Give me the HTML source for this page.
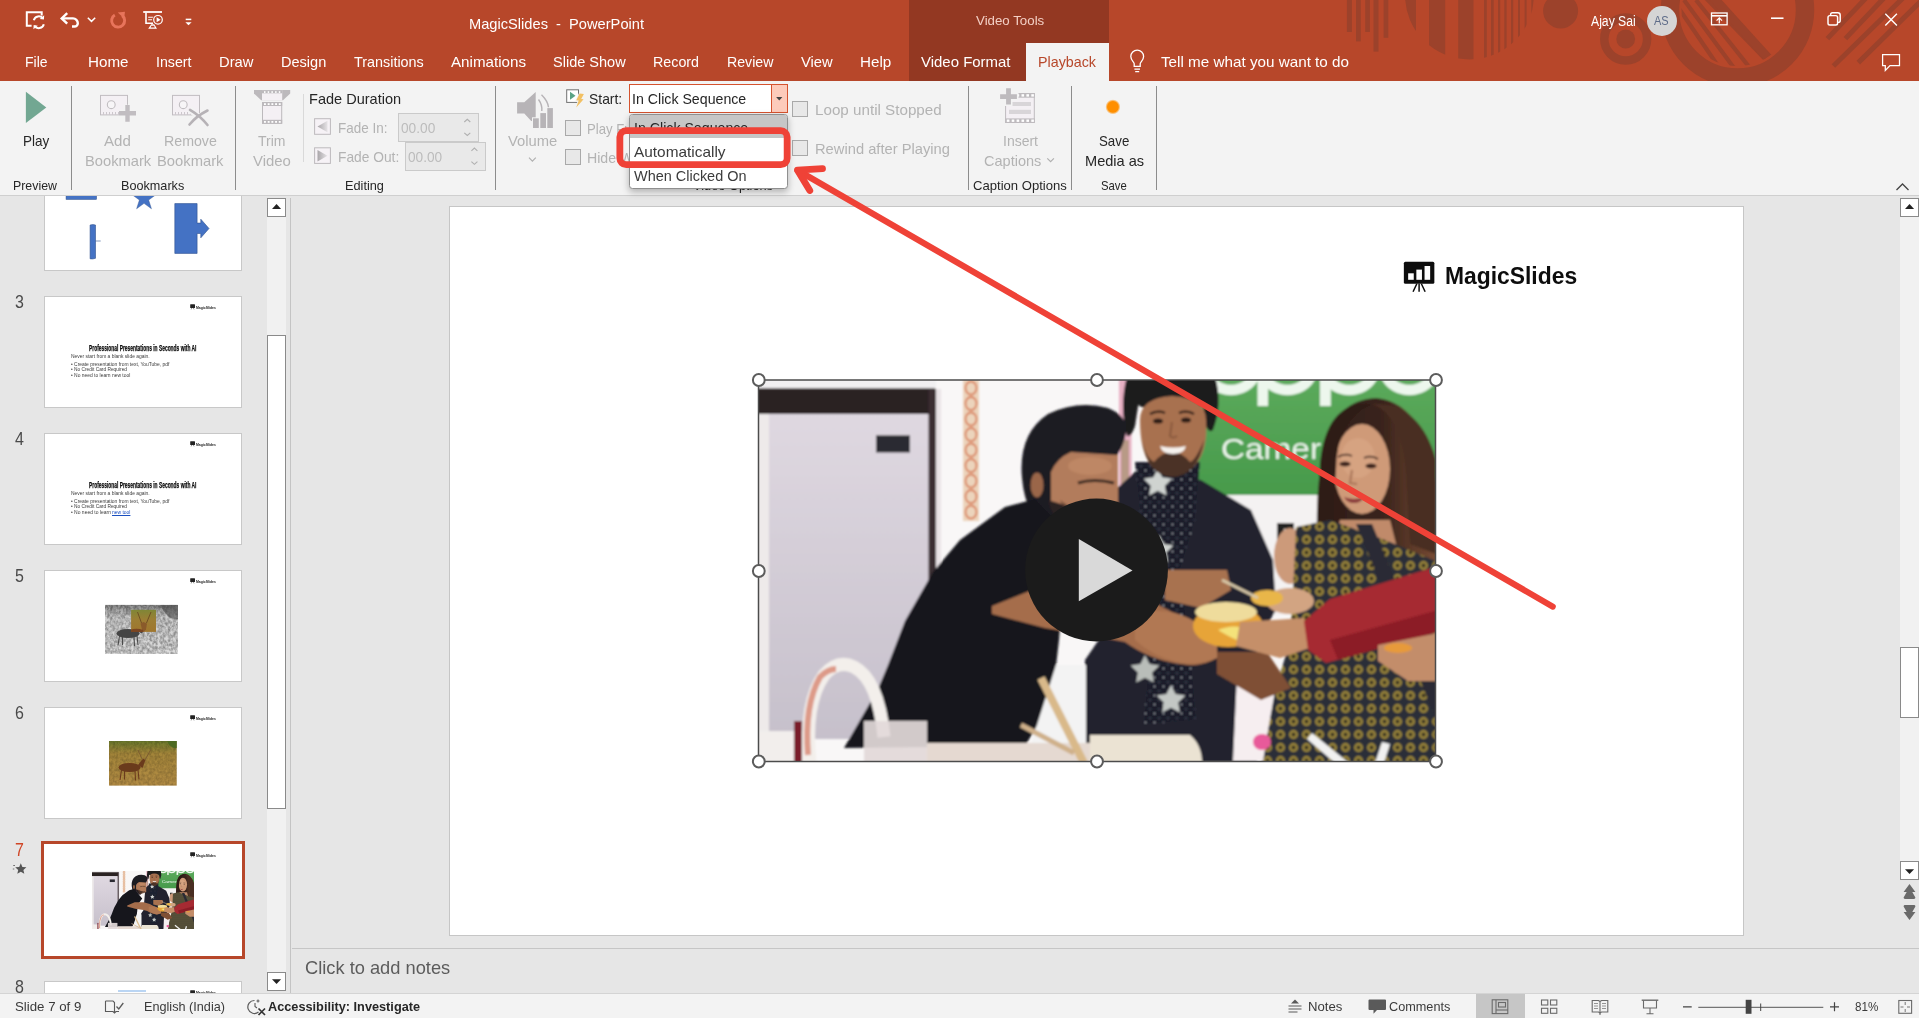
<!DOCTYPE html>
<html><head><meta charset="utf-8"><title>PowerPoint</title>
<style>
*{box-sizing:border-box;margin:0;padding:0}
html,body{width:1919px;height:1018px;overflow:hidden;background:#e6e6e6;font-family:"Liberation Sans",sans-serif;font-size:15px;color:#262626}
.abs{position:absolute}
#titlebar{position:absolute;left:0;top:0;width:1919px;height:81px;background:#b7472a;overflow:hidden}
#vtools{position:absolute;left:909px;top:0;width:200px;height:81px;background:#933822}
#pbtab{position:absolute;left:1026px;top:43px;width:83px;height:38px;background:#f3f3f3}
.t{position:absolute;white-space:pre;line-height:1;transform-origin:0 0}
#ribbon{position:absolute;left:0;top:81px;width:1919px;height:115px;background:#f3f3f3;border-bottom:1.5px solid #cfcfcf}
#divider{position:absolute;left:290px;top:198px;width:1px;height:796px;background:#c4c4c4}
#slide{position:absolute;left:449px;top:206px;width:1295px;height:730px;background:#fff;border:1px solid #c6c6c6}
#statusbar{position:absolute;left:0;top:993px;width:1919px;height:25px;background:#f3f3f3;border-top:1px solid #d4d4d4}
</style></head><body>
<svg width="0" height="0" style="position:absolute"><defs><filter id="pb" x="-5%" y="-5%" width="110%" height="110%"><feGaussianBlur stdDeviation="1.1"/></filter><filter id="pb2" x="-5%" y="-5%" width="110%" height="110%"><feGaussianBlur stdDeviation="3"/></filter><pattern id="dress" width="13" height="13" patternUnits="userSpaceOnUse"><rect width="13" height="13" fill="#2b2f38"/><circle cx="6.5" cy="6.5" r="4.4" fill="#a08a3a"/><circle cx="6.5" cy="6.5" r="2.2" fill="#3a3420"/></pattern><pattern id="stars" width="9" height="9" patternUnits="userSpaceOnUse"><rect width="9" height="9" fill="#1b1f2c"/><circle cx="2.5" cy="2.5" r="0.8" fill="#c4c8d0"/><circle cx="7" cy="7" r="0.6" fill="#a9aeb8"/></pattern><linearGradient id="frg" x1="0" x2="0" y1="0" y2="1"><stop offset="0" stop-color="#dfd8e1"/><stop offset="1" stop-color="#c6c0cb"/></linearGradient><linearGradient id="grn" x1="0" x2="0" y1="0" y2="1"><stop offset="0" stop-color="#5caa5c"/><stop offset="1" stop-color="#479a4b"/></linearGradient><linearGradient id="hairw" x1="0" x2="1"><stop offset="0" stop-color="#2e1c18"/><stop offset="0.55" stop-color="#3a241c"/><stop offset="1" stop-color="#7a4c34"/></linearGradient><symbol id="photo" viewBox="0 0 678 381" preserveAspectRatio="none"><g transform="translate(-758,-380)"><rect x="758" y="380" width="678" height="381" fill="#f9f7f7"/><g filter="url(#pb)"><rect x="1196" y="376" width="244" height="119" fill="url(#grn)"/><ellipse cx="1231" cy="369.5" rx="24.5" ry="20.5" fill="none" stroke="#edf7ed" stroke-width="10.5"/><ellipse cx="1287.5" cy="369.5" rx="24.5" ry="20.5" fill="none" stroke="#edf7ed" stroke-width="10.5"/><ellipse cx="1349.4" cy="369.5" rx="24.5" ry="20.5" fill="none" stroke="#edf7ed" stroke-width="10.5"/><ellipse cx="1409.4" cy="369.5" rx="24.5" ry="20.5" fill="none" stroke="#edf7ed" stroke-width="10.5"/><rect x="1257.5" y="369" width="10.5" height="37" fill="#edf7ed"/><rect x="1320" y="369" width="10.8" height="37" fill="#edf7ed"/><text x="1221" y="459" font-family="Liberation Sans,sans-serif" font-size="29" fill="#edf6ed" textLength="150" lengthAdjust="spacingAndGlyphs">Camera P</text><rect x="1200" y="495" width="140" height="120" fill="#f4f2f2"/><path d="M1277 523h17v6h-10v8h9v6h-9v17h-7z" fill="#222"/><rect x="756" y="378" width="180" height="12" fill="#f1eff1"/><rect x="756" y="388.3" width="179" height="26.7" fill="#2b2322"/><rect x="756" y="414" width="14" height="330" fill="#eeeaea"/><rect x="769" y="414" width="161" height="325" fill="url(#frg)"/><rect x="876" y="435.3" width="34" height="17.2" fill="#2b2b30"/><rect x="928.5" y="389" width="8.5" height="306" fill="#3a2e33"/><rect x="936" y="389" width="5" height="300" fill="#e9e3e6"/><rect x="963" y="378" width="16" height="143" fill="#ecd4bc"/><ellipse cx="971" cy="388" rx="5.5" ry="6.5" fill="none" stroke="#d9825e" stroke-width="1.8"/><ellipse cx="971" cy="403.5" rx="5.5" ry="6.5" fill="none" stroke="#d9825e" stroke-width="1.8"/><ellipse cx="971" cy="419" rx="5.5" ry="6.5" fill="none" stroke="#d9825e" stroke-width="1.8"/><ellipse cx="971" cy="434.5" rx="5.5" ry="6.5" fill="none" stroke="#d9825e" stroke-width="1.8"/><ellipse cx="971" cy="450" rx="5.5" ry="6.5" fill="none" stroke="#d9825e" stroke-width="1.8"/><ellipse cx="971" cy="465.5" rx="5.5" ry="6.5" fill="none" stroke="#d9825e" stroke-width="1.8"/><ellipse cx="971" cy="481" rx="5.5" ry="6.5" fill="none" stroke="#d9825e" stroke-width="1.8"/><ellipse cx="971" cy="496.5" rx="5.5" ry="6.5" fill="none" stroke="#d9825e" stroke-width="1.8"/><ellipse cx="971" cy="512" rx="5.5" ry="6.5" fill="none" stroke="#d9825e" stroke-width="1.8"/><rect x="1119" y="378" width="12.5" height="108" fill="#e8b0c4"/><rect x="1121" y="440" width="8" height="46" fill="#b89a86"/><path d="M1113 492l26-24 62 12 50 30 22 50 3 50-19 32v120h-172v-102l15-22z" fill="#24242f"/><path d="M1135 462h65l-5 58-15 50 10 82h-40v-82l-10-58z" fill="url(#stars)"/><path d="M1150 645l40 0 6 75-52 4z" fill="url(#stars)"/><path d="M1159 575l4.5 9 10 1.5-7.3 7 1.7 10-8.9-4.7-8.9 4.7 1.7-10-7.3-7 10-1.5z" fill="#cfd3d0" transform="translate(0,-40)"/><path d="M1159 575l4.5 9 10 1.5-7.3 7 1.7 10-8.9-4.7-8.9 4.7 1.7-10-7.3-7 10-1.5z" fill="#cfd3d0" transform="translate(22,-95) scale(.98)"/><path d="M1159 575l4.5 9 10 1.5-7.3 7 1.7 10-8.9-4.7-8.9 4.7 1.7-10-7.3-7 10-1.5z" fill="#c3c7c4" transform="translate(12,110)"/><path d="M1159 575l4.5 9 10 1.5-7.3 7 1.7 10-8.9-4.7-8.9 4.7 1.7-10-7.3-7 10-1.5z" fill="#b9bdb9" transform="translate(-14,80)"/><path d="M1127 436q-8-30 0-60l88 0q8 28-2 54q-4 4-8-6l-2-24-64 0-4 26q-4 12-8 10z" fill="#1f1b1f"/><ellipse cx="1170" cy="392" rx="42" ry="20" fill="#1f1b1f"/><path d="M1140 420q0-22 32-24q34 2 34 24q2 30-10 44q-10 12-24 12q-14 0-22-12q-10-14-10-44z" fill="#a8714f"/><path d="M1142 440q6 36 30 37q26-1 32-37q-8 20-14 22q-8-10-18-10q-10 0-18 10q-8-4-12-22z" fill="#4b3327"/><path d="M1160 446q13 3 26 0q-2 8-13 8q-11 0-13-8z" fill="#f6f2ee"/><ellipse cx="1158" cy="421" rx="5" ry="2.6" fill="#2a1c18"/><ellipse cx="1186" cy="420" rx="5" ry="2.6" fill="#2a1c18"/><path d="M1150 414q8-4 15-1M1179 413q8-3 15 1" fill="none" stroke="#2a1c18" stroke-width="2.2"/><path d="M1172 422l-2 14q3 3 7 0" fill="none" stroke="#8a5a3e" stroke-width="2"/><path d="M1318 560q-4-70 6-110q10-50 52-52q40 4 56 60l6 30v120l-40 10-30-60z" fill="url(#hairw)"/><path d="M1340 520l50 0 10 40-70-6z" fill="#c08a6a"/><ellipse cx="1362" cy="469" rx="28" ry="45" fill="#cf9a78"/><ellipse cx="1358" cy="458" rx="17" ry="20" fill="#d9a684" opacity="0.7"/><path d="M1336 470q0-50 36-66q-46-4-52 60l-2 96 16 0q-2-50 2-90z" fill="#2e1c18"/><path d="M1372 404q30 10 34 70l4 70 26 10 0-94q-16-58-64-56z" fill="#4a2e22"/><path d="M1344 497q10 4 20 0q-3 6-10 6q-7 0-10-6z" fill="#8a3a3a"/><path d="M1352 470l-2 13 7 1" fill="none" stroke="#a87458" stroke-width="2"/><ellipse cx="1345" cy="464" rx="5.5" ry="2.4" fill="#3a241e"/><ellipse cx="1371" cy="466" rx="5.5" ry="2.4" fill="#3a241e"/><path d="M1338 457q7-4 14-1M1364 458q7-3 14 1" fill="none" stroke="#4a3028" stroke-width="1.8"/><ellipse cx="1290" cy="556" rx="16" ry="28" fill="#cc9a7a"/><path d="M1296 527l34-7 55 20 53 22v201h-177l14-72 15-50 4-70z" fill="url(#dress)"/><path d="M1356 524l16 0 66 160v40z" fill="#2b2b35"/><path d="M1312 733l37 30h-14l-28-24z" fill="#f1f1f1"/><path d="M1382 742l8 2-6 19h-9z" fill="#f1f1f1"/><path d="M1237 676l40 0-14 85h-30z" fill="#f6eef0"/><ellipse cx="1262" cy="742" rx="9" ry="8" fill="#e85a9a"/><path d="M1050 452h68v66l-40 12-30-20z" fill="#b27c5b"/><path d="M1022 478q-4-44 26-64q30-14 60-6q20 8 18 24q-2 14-9 23l-46-3q-14 6-20 20l0 30q4 20 20 34l-20 0q-26-20-29-58z" fill="#1d1b24"/><ellipse cx="1037" cy="485" rx="6.5" ry="12.5" fill="#9a6648"/><path d="M1048 500q6 26 30 38l18-22-28-10z" fill="#2a2024"/><path d="M1078 483q16-5 36 0" fill="none" stroke="#3a2a24" stroke-width="3.2"/><ellipse cx="1090" cy="466" rx="22" ry="9" fill="#c08a68" opacity="0.8"/><path d="M1060 500q20 16 50 12l6 10-40 10z" fill="#5a3c2e" opacity="0.7"/><path d="M933 572L960 540L1005 507L1035 499L1060 525L1092 561L1062 601L1059 640L1056 666L1040 721L1025 746L844 748L878 689L888 665L905 621Z" fill="#17191f"/><path d="M992 606L1042 586L1102 586L1142 596L1217 636L1217 658Q1200 668 1180 664Q1150 660 1125 642L1100 637L1045 628L992 614Z" fill="#a56d4b"/><path d="M1135 615q45-15 82 25v18q-20 8-40 4q-25-6-42-22z" fill="#b17853"/><path d="M1217 652l50 0 24 36-30 12-44-26z" fill="#7f5034"/><path d="M1165 570h62l4 20-30 18-36-8z" fill="#a87250"/><ellipse cx="1290" cy="601" rx="24" ry="13" fill="#d2a482"/><ellipse cx="1228" cy="626" rx="35" ry="21" fill="#e7a437"/><ellipse cx="1226" cy="612" rx="31" ry="10" fill="#efdc9c"/><ellipse cx="1267" cy="598" rx="16" ry="8" fill="#e9b64a"/><path d="M1222 580l36 18" stroke="#d8c8a8" stroke-width="3"/><path d="M1218 630q20 12 22 10l4-12q-12-4-26 2z" fill="#f4e27a"/><path d="M1240 622l64-4 6 30-30 10-44-12z" fill="#c58f69"/><path d="M1304 621l26-22 108-33v66l-112 31-18-13z" fill="#a62a33"/><path d="M1330 640l108-30v22l-100 28z" fill="#8c1f28"/><path d="M1378 645l60-12v48l-30 0-30-20z" fill="#c38d6b"/><ellipse cx="1398" cy="648" rx="14" ry="5" fill="#e79a3a"/><rect x="756" y="731" width="50" height="32" fill="#f2eeec"/><path d="M1056 665h30v82h-56z" fill="#f3f3f3"/><rect x="794" y="721" width="8" height="42" fill="#7a1f2c"/><path d="M810 763q-6-60 14-88q14-16 30-8q24 12 30 70" fill="none" stroke="#f3efeb" stroke-width="13"/><path d="M808 755q-4-50 12-78q8-8 16-8" fill="none" stroke="#dd9a88" stroke-width="6"/><rect x="864" y="721" width="63" height="42" fill="#e3d9d9" opacity="0.92"/><rect x="927" y="743" width="175" height="20" fill="#e5d9d1"/><path d="M1090 735h100q12 10 12 28h-112z" fill="#ebe3d3"/><path d="M1041 678l43 85" stroke="#d9b98a" stroke-width="8"/><path d="M1021 725l53 28" stroke="#cfb08a" stroke-width="5"/></g></g></symbol></defs></svg>
<div class="abs" style="left:44px;top:160px;width:198px;height:110.5px;background:#fff;border:1px solid #c8c8c8;"></div>
<svg class="abs" style="left:0;top:196px" width="290" height="80" viewBox="0 196 290 80"><g fill="#4472c4" stroke="#2f528f" stroke-width="0.6"><rect x="66.1" y="190" width="30.3" height="9.3"/><path d="M144.1 176.5l4 12.5h13.1l-10.6 7.7 4 12.5-10.6-7.7-10.6 7.7 4-12.5-10.6-7.7h13.1z" transform="translate(144.1,199.5) scale(.70) translate(-144.1,-196)"/><path d="M90.1 225q3-0.8 5.4 0v33.3q-2.7 1-5.4 0.5z"/><path d="M95.5 241h5.2" /><path d="M174.8 203.6h22.3v19.5h3.7v-3.9l8.2 9.3-8.2 9.3v-4.3h-3.7v19.9h-22.3z"/></g></svg>
<div class="abs" style="left:44px;top:296.2px;width:198px;height:111.6px;background:#fff;border:1px solid #c8c8c8;"></div>
<svg class="abs" style="left:189px;top:303.4px" width="30" height="10" viewBox="0 0 30 10"><rect x="1.2" y="1.3" width="4.8" height="3.7" rx="0.5" fill="#222"/><path d="M2.8 5l-0.6 1.4M4.4 5l0.6 1.4" stroke="#222" stroke-width="0.5"/></svg><span class="t" style="left:196.3px;top:305.94px;font-size:4.2px;color:#222;font-weight:bold;transform:scaleX(0.8189);">MagicSlides</span>
<span class="t" style="left:15.3px;top:292.74px;font-size:18.5px;color:#4a4a4a;transform:scaleX(0.8641);">3</span>
<div class="abs" style="left:44px;top:433.2px;width:198px;height:111.6px;background:#fff;border:1px solid #c8c8c8;"></div>
<svg class="abs" style="left:189px;top:440.4px" width="30" height="10" viewBox="0 0 30 10"><rect x="1.2" y="1.3" width="4.8" height="3.7" rx="0.5" fill="#222"/><path d="M2.8 5l-0.6 1.4M4.4 5l0.6 1.4" stroke="#222" stroke-width="0.5"/></svg><span class="t" style="left:196.3px;top:442.94px;font-size:4.2px;color:#222;font-weight:bold;transform:scaleX(0.8189);">MagicSlides</span>
<span class="t" style="left:15.3px;top:429.74px;font-size:18.5px;color:#4a4a4a;transform:scaleX(0.8641);">4</span>
<div class="abs" style="left:44px;top:570.2px;width:198px;height:111.6px;background:#fff;border:1px solid #c8c8c8;"></div>
<svg class="abs" style="left:189px;top:577.4px" width="30" height="10" viewBox="0 0 30 10"><rect x="1.2" y="1.3" width="4.8" height="3.7" rx="0.5" fill="#222"/><path d="M2.8 5l-0.6 1.4M4.4 5l0.6 1.4" stroke="#222" stroke-width="0.5"/></svg><span class="t" style="left:196.3px;top:579.94px;font-size:4.2px;color:#222;font-weight:bold;transform:scaleX(0.8189);">MagicSlides</span>
<span class="t" style="left:15.3px;top:566.74px;font-size:18.5px;color:#4a4a4a;transform:scaleX(0.8641);">5</span>
<div class="abs" style="left:44px;top:707.2px;width:198px;height:111.6px;background:#fff;border:1px solid #c8c8c8;"></div>
<svg class="abs" style="left:189px;top:714.4px" width="30" height="10" viewBox="0 0 30 10"><rect x="1.2" y="1.3" width="4.8" height="3.7" rx="0.5" fill="#222"/><path d="M2.8 5l-0.6 1.4M4.4 5l0.6 1.4" stroke="#222" stroke-width="0.5"/></svg><span class="t" style="left:196.3px;top:716.94px;font-size:4.2px;color:#222;font-weight:bold;transform:scaleX(0.8189);">MagicSlides</span>
<span class="t" style="left:15.3px;top:703.74px;font-size:18.5px;color:#4a4a4a;transform:scaleX(0.8641);">6</span>
<div class="abs" style="left:41px;top:841px;width:204px;height:118px;background:#fff;border:3px solid #b7472a"></div>
<svg class="abs" style="left:189px;top:851.4px" width="30" height="10" viewBox="0 0 30 10"><rect x="1.2" y="1.3" width="4.8" height="3.7" rx="0.5" fill="#222"/><path d="M2.8 5l-0.6 1.4M4.4 5l0.6 1.4" stroke="#222" stroke-width="0.5"/></svg><span class="t" style="left:196.3px;top:853.94px;font-size:4.2px;color:#222;font-weight:bold;transform:scaleX(0.8189);">MagicSlides</span>
<span class="t" style="left:15.3px;top:840.74px;font-size:18.5px;color:#d04525;transform:scaleX(0.8641);">7</span>
<div class="abs" style="left:44px;top:981.4px;width:198px;height:111.6px;background:#fff;border:1px solid #c8c8c8;"></div>
<svg class="abs" style="left:189px;top:988.6px" width="30" height="10" viewBox="0 0 30 10"><rect x="1.2" y="1.3" width="4.8" height="3.7" rx="0.5" fill="#222"/><path d="M2.8 5l-0.6 1.4M4.4 5l0.6 1.4" stroke="#222" stroke-width="0.5"/></svg><span class="t" style="left:196.3px;top:991.14px;font-size:4.2px;color:#222;font-weight:bold;transform:scaleX(0.8189);">MagicSlides</span>
<span class="t" style="left:15.3px;top:977.94px;font-size:18.5px;color:#4a4a4a;transform:scaleX(0.8641);">8</span>
<span class="t" style="left:89.4px;top:344.05px;font-size:8.8px;color:#0a0a0a;font-weight:bold;transform:scaleX(0.5547);-webkit-text-stroke:0.25px #0a0a0a;">Professional Presentations in Seconds with AI</span><span class="t" style="left:70.6px;top:354.79px;font-size:4.5px;color:#3a3a3a;transform:scaleX(1.0923);">Never start from a blank slide again.</span><span class="t" style="left:70.6px;top:362.99px;font-size:4.5px;color:#3a3a3a;transform:scaleX(1.0933);">• Create presentation from text, YouTube, pdf</span><span class="t" style="left:70.6px;top:367.79px;font-size:4.5px;color:#3a3a3a;transform:scaleX(1.0697);">• No Credit Card Required</span><span class="t" style="left:70.6px;top:373.79px;font-size:4.5px;color:#3a3a3a;transform:scaleX(1.0961);">• No need to learn new tool</span>
<span class="t" style="left:89.4px;top:481.05px;font-size:8.8px;color:#0a0a0a;font-weight:bold;transform:scaleX(0.5547);-webkit-text-stroke:0.25px #0a0a0a;">Professional Presentations in Seconds with AI</span><span class="t" style="left:70.6px;top:491.79px;font-size:4.5px;color:#3a3a3a;transform:scaleX(1.0923);">Never start from a blank slide again.</span><span class="t" style="left:70.6px;top:499.99px;font-size:4.5px;color:#3a3a3a;transform:scaleX(1.0933);">• Create presentation from text, YouTube, pdf</span><span class="t" style="left:70.6px;top:504.79px;font-size:4.5px;color:#3a3a3a;transform:scaleX(1.0697);">• No Credit Card Required</span><span class="t" style="left:70.6px;top:510.79px;font-size:4.5px;color:#3a3a3a;transform:scaleX(1.1053);">• No need to learn</span><span class="t" style="left:111.5px;top:510.79px;font-size:4.5px;color:#1a4fc0;transform:scaleX(1.0985);text-decoration:underline;">new tool</span>
<svg class="abs" style="left:0;top:560px" width="290" height="260" viewBox="0 560 290 260"><defs><filter id="tb"><feGaussianBlur stdDeviation="0.6"/></filter><filter id="grass" x="0" y="0" width="100%" height="100%"><feTurbulence type="fractalNoise" baseFrequency="0.38 0.32" numOctaves="2" seed="7" result="n"/><feColorMatrix type="matrix" values="0 0 0 0 0  0 0 0 0 0  0 0 0 0 0  1.6 1.6 0 0 -1.15" in="n" result="a"/><feComposite in="a" in2="SourceGraphic" operator="in"/></filter><linearGradient id="bw" x1="0" x2="0" y1="0" y2="1"><stop offset="0" stop-color="#8c8c8c"/><stop offset="0.25" stop-color="#cfcfcf"/><stop offset="1" stop-color="#dcdcdc"/></linearGradient><linearGradient id="dg" x1="0" x2="0" y1="0" y2="1"><stop offset="0" stop-color="#6c7a2c"/><stop offset="0.28" stop-color="#a4863a"/><stop offset="1" stop-color="#b38c44"/></linearGradient><linearGradient id="sp" x1="0" x2="0" y1="0" y2="1"><stop offset="0" stop-color="#7f8636"/><stop offset="0.45" stop-color="#9c7e34"/><stop offset="1" stop-color="#a0762e"/></linearGradient></defs><rect x="105.1" y="604.9" width="72.8" height="49" fill="url(#bw)"/><rect x="105.1" y="604.9" width="72.8" height="49" fill="#4c4c4c" filter="url(#grass)" opacity="0.33"/><path d="M160 605h18v14q-10 2-18-14z" fill="#4a4a4a" opacity="0.55" filter="url(#tb)"/><g filter="url(#tb)"><ellipse cx="128" cy="633.5" rx="11.5" ry="4.6" fill="#454545"/><path d="M137 631l6-6 2 1.5-3 7z" fill="#454545"/><path d="M119.5 636l-1.5 9.5M122.5 637l0 8M134 637l0.5 9M137 636l1 9" stroke="#4a4a4a" stroke-width="1.1" fill="none"/></g><rect x="131.1" y="609.8" width="24.9" height="22.1" fill="url(#sp)"/><g filter="url(#tb)"><path d="M141.5 623l-4-11M146.5 623l4.5-11" stroke="#6b4a22" stroke-width="0.9"/><path d="M140.5 623.5l3-1.5 3.5 1.5-1 6-2 2.3h-1.5z" fill="#8a5a2c"/><path d="M131.1 629.5q6-1.5 12 0.5l0 1.9h-12z" fill="#7a4420"/></g><rect x="109" y="741" width="67.7" height="44.6" fill="url(#dg)"/><rect x="109" y="741" width="67.7" height="44.6" fill="#5a4010" filter="url(#grass)" opacity="0.17"/><g filter="url(#tb)"><path d="M167 741h9.7v7q-6 1-9.7-7z" fill="#4e6a22"/><ellipse cx="129.5" cy="767.5" rx="11" ry="4.5" fill="#6b3a1c"/><path d="M138 765l5-6.5 2.5 1.5-3 8z" fill="#6b3a1c"/><path d="M121.5 770l-1.5 10M124.5 771l0 8.5M135 771l0.5 9.5M138 770l1 9.5" stroke="#6b3a1c" stroke-width="1.1" fill="none"/><path d="M142.5 760l-4.5-10M145 760l5.5-10" stroke="#7a5a30" stroke-width="0.9"/></g></svg>
<svg class="abs" style="left:92px;top:871px" width="102" height="58" viewBox="0 0 678 381" preserveAspectRatio="none"><use href="#photo" width="678" height="381"/></svg>
<svg class="abs" style="left:12px;top:861px" width="16" height="15" viewBox="0 0 16 15"><path d="M8.8 2.2l1.6 3.7 4 0.4-3 2.6 0.9 3.9-3.5-2.1-3.5 2.1 0.9-3.9-3-2.6 4-0.4z" fill="#555"/><path d="M1.2 4.5h1.8M0.8 8h1.5" stroke="#555" stroke-width="0.8"/></svg>
<div class="abs" style="left:118px;top:989.5px;width:28px;height:2px;background:#9dc3ee;opacity:.7"></div>
<div class="abs" style="left:267px;top:198px;width:19px;height:793px;background:#f1f1f1"></div>
<div class="abs" style="left:267px;top:198px;width:19px;height:19px;background:#fff;border:1px solid #8a8a8a"></div>
<div class="abs" style="left:267px;top:335px;width:19px;height:474px;background:#fff;border:1px solid #8a8a8a"></div>
<div class="abs" style="left:267px;top:972px;width:19px;height:19px;background:#fff;border:1px solid #8a8a8a"></div>
<svg class="abs" style="left:267px;top:198px" width="19" height="800" viewBox="0 0 19 800"><path d="M5 11l4.55-4.9 4.55 4.9z" fill="#222"/><path d="M5 781.2l4.55 4.9 4.55-4.9z" fill="#222"/></svg>
<div id="divider"></div>
<div id="slide"></div>
<svg class="abs" style="left:1400px;top:258px" width="40" height="40" viewBox="1400 258 40 40"><g transform="translate(1403.85,261.8) scale(1)"><rect x="0" y="0" width="30.5" height="22" rx="1.5" fill="#0d0d0d"/><rect x="4.3" y="11.5" width="5.6" height="6.5" fill="#fff"/><rect x="12.5" y="7.8" width="5.6" height="10.2" fill="#fff"/><rect x="20.7" y="4.2" width="5.6" height="13.8" fill="#fff"/><path d="M13 22l-3.8 8M15.25 22v8M17.5 22l3.8 8" stroke="#0d0d0d" stroke-width="1.5"/></g></svg>
<span class="t" style="left:1444.6px;top:265.28px;font-size:23.3px;color:#0d0d0d;font-weight:bold;transform:scaleX(0.9811);">MagicSlides</span>
<svg class="abs" style="left:758px;top:380px" width="678" height="381" viewBox="0 0 678 381"><use href="#photo" width="678" height="381"/><circle cx="338.5" cy="190" r="71.4" fill="#1b1b1b"/><path d="M320.8 158.9v62.3l53.7-30.7z" fill="#d9d9d9"/></svg>
<svg class="abs" style="left:740px;top:362px" width="714" height="418" viewBox="740 362 714 418"><rect x="758.5" y="380" width="677" height="381.5" fill="none" stroke="#4c4c4c" stroke-width="1.5"/><circle cx="758.8" cy="380" r="5.9" fill="#fff" stroke="#5c5c5c" stroke-width="2"/><circle cx="758.8" cy="571" r="5.9" fill="#fff" stroke="#5c5c5c" stroke-width="2"/><circle cx="758.8" cy="761.5" r="5.9" fill="#fff" stroke="#5c5c5c" stroke-width="2"/><circle cx="1097" cy="380" r="5.9" fill="#fff" stroke="#5c5c5c" stroke-width="2"/><circle cx="1097" cy="761.5" r="5.9" fill="#fff" stroke="#5c5c5c" stroke-width="2"/><circle cx="1436" cy="380" r="5.9" fill="#fff" stroke="#5c5c5c" stroke-width="2"/><circle cx="1436" cy="571" r="5.9" fill="#fff" stroke="#5c5c5c" stroke-width="2"/><circle cx="1436" cy="761.5" r="5.9" fill="#fff" stroke="#5c5c5c" stroke-width="2"/></svg>
<div class="abs" style="left:292px;top:948px;width:1627px;height:1px;background:#c6c6c6"></div>
<span class="t" style="left:305.4px;top:959.04px;font-size:18.5px;color:#5c5c5c;transform:scaleX(0.9874);">Click to add notes</span>
<div class="abs" style="left:1900px;top:198px;width:19px;height:682px;background:#f1f1f1"></div>
<div class="abs" style="left:1900px;top:198px;width:19px;height:19px;background:#fff;border:1px solid #8a8a8a"></div>
<div class="abs" style="left:1900px;top:647px;width:19px;height:71px;background:#fff;border:1px solid #8a8a8a"></div>
<div class="abs" style="left:1900px;top:861px;width:19px;height:19px;background:#fff;border:1px solid #8a8a8a"></div>
<svg class="abs" style="left:1900px;top:197px" width="19" height="730" viewBox="1900 197 19 730"><path d="M1905 209l4.55-4.9 4.55 4.9z" fill="#222"/><path d="M1905 869.2l4.55 4.9 4.55-4.9z" fill="#222"/><path d="M1909.5 884L1915.4 892L1912.3 892L1915.4 897.5Q1915.4 898.9 1914 898.9L1905 898.9Q1903.6 898.9 1903.6 897.5L1906.7 892L1903.6 892Z" fill="#6a6a6a"/><path d="M1909.5 920L1915.4 912L1912.3 912L1915.4 906.4Q1915.4 905 1914 905L1905 905Q1903.6 905 1903.6 906.4L1906.7 912L1903.6 912Z" fill="#6a6a6a"/></svg>
<div id="titlebar">
<svg class="abs" style="left:0;top:0" width="1919" height="81" viewBox="0 0 1919 81"><g fill="#9c422b"><rect x="1346.9" y="0" width="5" height="32"/><rect x="1356" y="0" width="4.8" height="41.4"/><rect x="1365.2" y="0" width="4.7" height="32"/><rect x="1373.5" y="0" width="5" height="51.6"/><rect x="1383.6" y="0" width="4.7" height="37.8"/><clipPath id="sd"><circle cx="1469.5" cy="-5" r="64.5"/></clipPath><g clip-path="url(#sd)"><rect x="1400" y="0" width="16" height="70"/><rect x="1429" y="0" width="16.2" height="70"/><rect x="1458.2" y="0" width="15.3" height="70"/><rect x="1484" y="0" width="2.8" height="70"/><rect x="1491" y="0" width="2.7" height="70"/><rect x="1498" y="0" width="2.2" height="70"/><rect x="1504.3" y="0" width="2.3" height="70"/><rect x="1511" y="0" width="2.2" height="70"/><rect x="1518" y="0" width="2" height="70"/><rect x="1524.6" y="0" width="2" height="70"/><rect x="1531.3" y="0" width="2.4" height="70"/></g><circle cx="1560.6" cy="11" r="17.5"/><circle cx="1625.7" cy="39" r="9.4"/></g><circle cx="1625.7" cy="39" r="21.4" fill="none" stroke="#9c422b" stroke-width="8.5"/><circle cx="1737.5" cy="10" r="67.5" fill="none" stroke="#9c422b" stroke-width="18.5"/><clipPath id="rc"><circle cx="1737.5" cy="10" r="56"/></clipPath><g clip-path="url(#rc)" stroke="#9c422b" stroke-width="4.2" fill="none"><line x1="1676" y1="4" x2="1718" y2="66"/><line x1="1684" y1="0" x2="1734" y2="68"/><line x1="1696" y1="0" x2="1750" y2="68"/><line x1="1702" y1="-6" x2="1768" y2="62"/><line x1="1712" y1="-4" x2="1770" y2="60" stroke-width="9"/></g><g stroke="#9c422b" stroke-width="5" fill="none"><line x1="1827.4" y1="38.6" x2="1866" y2="-2"/><line x1="1845.4" y1="38.6" x2="1884" y2="-2"/><line x1="1833.4" y1="66" x2="1903" y2="-2"/><line x1="1858.3" y1="62.6" x2="1921" y2="1"/></g></svg>
<div id="vtools"></div><div id="pbtab"></div>
<span class="t" style="left:469px;top:15.8px;font-size:15px;color:#fff;transform:scaleX(0.9763);">MagicSlides  -  PowerPoint</span>
<span class="t" style="left:976.25px;top:13.57px;font-size:13.5px;color:#f3cfc4;transform:scaleX(0.9848);">Video Tools</span>
<span class="t" style="left:25px;top:54px;font-size:15px;color:#fff;transform:scaleX(0.9317);">File</span>
<span class="t" style="left:88.25px;top:54.3px;font-size:15px;color:#fff;transform:scaleX(1.0125);">Home</span>
<span class="t" style="left:156.25px;top:54.3px;font-size:15px;color:#fff;transform:scaleX(0.9467);">Insert</span>
<span class="t" style="left:219.25px;top:54.3px;font-size:15px;color:#fff;transform:scaleX(0.9843);">Draw</span>
<span class="t" style="left:281.25px;top:54.3px;font-size:15px;color:#fff;transform:scaleX(0.969);">Design</span>
<span class="t" style="left:354px;top:54.3px;font-size:15px;color:#fff;transform:scaleX(0.9581);">Transitions</span>
<span class="t" style="left:450.75px;top:54.3px;font-size:15px;color:#fff;transform:scaleX(1.0108);">Animations</span>
<span class="t" style="left:553px;top:54.3px;font-size:15px;color:#fff;transform:scaleX(0.9687);">Slide Show</span>
<span class="t" style="left:653.25px;top:54.3px;font-size:15px;color:#fff;transform:scaleX(0.9514);">Record</span>
<span class="t" style="left:727.25px;top:54.3px;font-size:15px;color:#fff;transform:scaleX(0.9442);">Review</span>
<span class="t" style="left:800.75px;top:54.3px;font-size:15px;color:#fff;transform:scaleX(0.983);">View</span>
<span class="t" style="left:860px;top:54.3px;font-size:15px;color:#fff;transform:scaleX(1.013);">Help</span>
<span class="t" style="left:921.25px;top:54.3px;font-size:15px;color:#fff;transform:scaleX(0.9972);">Video Format</span>
<span class="t" style="left:1038.25px;top:54.3px;font-size:15px;color:#b7472a;transform:scaleX(0.9524);">Playback</span>
<span class="t" style="left:1161px;top:54.3px;font-size:15px;color:#fff;transform:scaleX(1.0157);">Tell me what you want to do</span>
<span class="t" style="left:1591.25px;top:13.95px;font-size:14px;color:#fff;transform:scaleX(0.8715);">Ajay Sai</span>
<div class="abs" style="left:1647px;top:5.6px;width:30px;height:30px;border-radius:50%;background:#d5d5d5"></div>
<span class="t" style="left:1654.3px;top:15.12px;font-size:12.5px;color:#5d6b88;transform:scaleX(0.8802);">AS</span>
<svg class="abs" style="left:0;top:0" width="1919" height="81" viewBox="0 0 1919 81" fill="none" stroke="#fff" stroke-width="1.3"><path d="M41.7 15.5v-3.2h-14.9v13.5h4.8" stroke-width="2" stroke-linejoin="miter"/><path d="M33.8 20.3a5.2 5.2 0 0 1 9.3-1.8" stroke-width="2"/><path d="M44.2 15.3l-0.3 4.3-4.2-0.7z" fill="#fff" stroke="none"/><path d="M43.8 24.2a5.2 5.2 0 0 1-9.3 1.8" stroke-width="2"/><path d="M33.4 29.3l0.3-4.3 4.2 0.7z" fill="#fff" stroke="none"/><path d="M67.2 13.2l-5.5 5.2 5.5 5.2" stroke-width="2.4" stroke-linejoin="miter"/><path d="M62.5 18.4h10.5a4.8 4.8 0 0 1 4.8 4.8v0a3.3 3.3 0 0 1-3.3 3.3h-2.5" stroke-width="2.4"/><path d="M87.8 17.8l3.7 3.6 3.7-3.6" stroke-width="1.5"/><g stroke="#e8745b"><path d="M114.8 15a6.5 6.5 0 1 0 7.4 0.5" stroke-width="2.9"/></g><path d="M117.8 12.6l7.2-0.8-0.9 6.8z" fill="#e8745b" stroke="none"/><path d="M143.2 12h18.8" stroke-width="1.8"/><path d="M146 12.5v10.8h7" stroke-width="1.6"/><path d="M148.2 17.3h5.3M148.2 19.8h4" stroke-width="1.1"/><circle cx="158" cy="19.8" r="5.6" fill="#b7472a" stroke="none"/><circle cx="158" cy="19.8" r="4.3" stroke-width="1.2"/><path d="M156.6 17.3v5l4-2.5z" fill="#fff" stroke="none"/><path d="M151.2 24.2h3l2.8 4.6h-8.8z" fill="#fff" stroke="none"/><path d="M151.4 25.8h2.6l0.9 1.6h-4.4z" fill="#b7472a" stroke="none"/><path d="M185.7 19.4h5.6" stroke-width="1.5"/><path d="M185.4 22.2l3.1 3.1 3.1-3.1z" fill="#fff" stroke="none"/><path d="M1134.2 66.3v-2.6c0-1.6-3.4-3.4-3.4-7.1a6.4 6.4 0 0 1 12.8 0c0 3.7-3.4 5.5-3.4 7.1v2.6z" stroke-width="1.3"/><path d="M1134.4 69.2h5.6M1135.2 71.6h4" stroke-width="1.2"/><rect x="1711.5" y="13" width="15.6" height="11.8" stroke-width="1.3"/><path d="M1711.5 15.8h15.6" stroke-width="1.6"/><path d="M1719.3 23.5v-5.4M1716.6 20.6l2.7-2.7 2.7 2.7" stroke-width="1.2"/><path d="M1771 18.2h12.5" stroke-width="1.6"/><rect x="1828" y="15.6" width="9.6" height="9.4" rx="1.8" stroke-width="1.45"/><path d="M1830.6 15.4v-0.6a2 2 0 0 1 2-2h5.2a2.4 2.4 0 0 1 2.4 2.4v5.2a2 2 0 0 1-2 2h-0.4" stroke-width="1.45"/><path d="M1885.3 13.8l11.6 11.6M1896.9 13.8l-11.6 11.6" stroke-width="1.4"/><path d="M1882.6 54.5h16.9v11h-9.5l-4.7 5v-5h-2.7z" stroke-width="1.25"/></svg>
</div>
<div id="ribbon"></div>
<div class="abs" style="left:71px;top:86px;width:1px;height:104px;background:#8c8c8c"></div>
<div class="abs" style="left:234.9px;top:86px;width:1px;height:104px;background:#8c8c8c"></div>
<div class="abs" style="left:495px;top:86px;width:1px;height:104px;background:#8c8c8c"></div>
<div class="abs" style="left:967.9px;top:86px;width:1px;height:104px;background:#8c8c8c"></div>
<div class="abs" style="left:1070.9px;top:86px;width:1px;height:104px;background:#8c8c8c"></div>
<div class="abs" style="left:1156.3px;top:86px;width:1px;height:104px;background:#8c8c8c"></div>
<div class="abs" style="left:303px;top:93.5px;width:1px;height:68px;background:#d9d9d9"></div>
<span class="t" style="left:13px;top:179.63px;font-size:12.6px;color:#262626;transform:scaleX(0.981);">Preview</span>
<span class="t" style="left:121.25px;top:179.63px;font-size:12.6px;color:#262626;transform:scaleX(1.004);">Bookmarks</span>
<span class="t" style="left:345.25px;top:179.63px;font-size:12.6px;color:#262626;transform:scaleX(1.0117);">Editing</span>
<span class="t" style="left:972.5px;top:179.63px;font-size:12.6px;color:#262626;transform:scaleX(1.0393);">Caption Options</span>
<span class="t" style="left:1100.5px;top:179.63px;font-size:12.6px;color:#262626;transform:scaleX(0.899);">Save</span>
<span class="t" style="left:692.5px;top:179.73px;font-size:12.6px;color:#262626;transform:scaleX(1.0139);">Video Options</span>
<span class="t" style="left:22.5px;top:133px;font-size:15px;color:#262626;transform:scaleX(0.899);">Play</span>
<span class="t" style="left:104.4px;top:133px;font-size:15px;color:#b3b3b3;transform:scaleX(1.0056);">Add</span>
<span class="t" style="left:84.75px;top:152.7px;font-size:15px;color:#b3b3b3;transform:scaleX(0.9793);">Bookmark</span>
<span class="t" style="left:163.75px;top:133px;font-size:15px;color:#b3b3b3;transform:scaleX(0.9463);">Remove</span>
<span class="t" style="left:156.6px;top:152.7px;font-size:15px;color:#b3b3b3;transform:scaleX(0.9845);">Bookmark</span>
<span class="t" style="left:257.6px;top:132.8px;font-size:15px;color:#b3b3b3;transform:scaleX(0.9338);">Trim</span>
<span class="t" style="left:252.5px;top:152.5px;font-size:15px;color:#b3b3b3;transform:scaleX(0.9948);">Video</span>
<span class="t" style="left:309.4px;top:91px;font-size:15px;color:#262626;transform:scaleX(0.969);">Fade Duration</span>
<span class="t" style="left:337.6px;top:120.1px;font-size:15px;color:#b3b3b3;transform:scaleX(0.8974);">Fade In:</span>
<span class="t" style="left:337.6px;top:149px;font-size:15px;color:#b3b3b3;transform:scaleX(0.9175);">Fade Out:</span>
<div class="abs" style="left:398px;top:113px;width:81px;height:28.5px;background:#e9e9e9;border:1px solid #cacaca"></div>
<div class="abs" style="left:405px;top:142px;width:81px;height:28.5px;background:#e9e9e9;border:1px solid #cacaca"></div>
<span class="t" style="left:401.2px;top:120.1px;font-size:15px;color:#bcbcbc;transform:scaleX(0.9134);">00&#46;00</span>
<span class="t" style="left:408.4px;top:149px;font-size:15px;color:#bcbcbc;transform:scaleX(0.9108);">00&#46;00</span>
<span class="t" style="left:508.3px;top:133px;font-size:15px;color:#b3b3b3;transform:scaleX(0.985);">Volume</span>
<span class="t" style="left:589.4px;top:91px;font-size:15px;color:#262626;transform:scaleX(0.9261);">Start:</span>
<span class="t" style="left:587.4px;top:121px;font-size:15px;color:#b3b3b3;transform:scaleX(0.8764);">Play Full Screen</span>
<span class="t" style="left:587.4px;top:149.9px;font-size:15px;color:#b3b3b3;transform:scaleX(0.9433);">Hide While Not Playing</span>
<span class="t" style="left:814.7px;top:102px;font-size:15px;color:#b3b3b3;transform:scaleX(1.0128);">Loop until Stopped</span>
<span class="t" style="left:814.7px;top:141px;font-size:15px;color:#b3b3b3;transform:scaleX(0.9807);">Rewind after Playing</span>
<span class="t" style="left:1002.6px;top:133.1px;font-size:15px;color:#b3b3b3;transform:scaleX(0.9333);">Insert</span>
<span class="t" style="left:984.4px;top:152.7px;font-size:15px;color:#b3b3b3;transform:scaleX(0.9679);">Captions</span>
<span class="t" style="left:1099.4px;top:133.1px;font-size:15px;color:#262626;transform:scaleX(0.886);">Save</span>
<span class="t" style="left:1084.6px;top:152.7px;font-size:15px;color:#262626;transform:scaleX(0.9712);">Media as</span>
<div class="abs" style="left:565.1px;top:120px;width:15.8px;height:15.8px;background:#e8e8e8;border:1px solid #a9a9a9"></div>
<div class="abs" style="left:565.1px;top:149.2px;width:15.8px;height:15.8px;background:#e8e8e8;border:1px solid #a9a9a9"></div>
<div class="abs" style="left:792.2px;top:101.1px;width:15.8px;height:15.8px;background:#e8e8e8;border:1px solid #a9a9a9"></div>
<div class="abs" style="left:792.2px;top:140.1px;width:15.8px;height:15.8px;background:#e8e8e8;border:1px solid #a9a9a9"></div>
<div class="abs" style="left:628.6px;top:83.6px;width:159.6px;height:29.6px;background:#fff;border:1.3px solid #d5532f"></div>
<div class="abs" style="left:770.6px;top:83.6px;width:17.6px;height:29.6px;background:#fdcbbb;border:1.3px solid #d5532f"></div>
<span class="t" style="left:632px;top:91px;font-size:15px;color:#262626;transform:scaleX(0.945);">In Click Sequence</span>
<svg class="abs" style="left:0;top:81px" width="1919" height="115" viewBox="0 81 1919 115" fill="none"><path d="M25.9 91.7v31.4l20.4-15.7z" fill="#72a792"/><rect x="100.5" y="95.4" width="27" height="19.5" fill="#f4f0f4" stroke="#c1bdc1" stroke-width="1"/><circle cx="111.25" cy="104.7" r="3.9" fill="#f7f5f7" stroke="#c1bdc1" stroke-width="1.1"/><path d="M103.5 112v2.5" stroke="#c1bdc1" stroke-width="0.8"/><path d="M106.5 112v2.5" stroke="#c1bdc1" stroke-width="0.8"/><path d="M109.5 112v2.5" stroke="#c1bdc1" stroke-width="0.8"/><path d="M112.5 112v2.5" stroke="#c1bdc1" stroke-width="0.8"/><path d="M115.5 112v2.5" stroke="#c1bdc1" stroke-width="0.8"/><path d="M118.5 112v2.5" stroke="#c1bdc1" stroke-width="0.8"/><rect x="172.5" y="95.4" width="27" height="19.5" fill="#f4f0f4" stroke="#c1bdc1" stroke-width="1"/><circle cx="183.25" cy="104.7" r="3.9" fill="#f7f5f7" stroke="#c1bdc1" stroke-width="1.1"/><path d="M175.5 112v2.5" stroke="#c1bdc1" stroke-width="0.8"/><path d="M178.5 112v2.5" stroke="#c1bdc1" stroke-width="0.8"/><path d="M181.5 112v2.5" stroke="#c1bdc1" stroke-width="0.8"/><path d="M184.5 112v2.5" stroke="#c1bdc1" stroke-width="0.8"/><path d="M187.5 112v2.5" stroke="#c1bdc1" stroke-width="0.8"/><path d="M190.5 112v2.5" stroke="#c1bdc1" stroke-width="0.8"/><path d="M127.5 104.7v17.2M119 113.3h17.2" stroke="#f3f3f3" stroke-width="7.5"/><path d="M127.5 105v16.8M119 113.3h17" stroke="#c1bdc1" stroke-width="4.4"/><path d="M189.5 109l18.5 16.5M208 110l-18.5 15" stroke="#f3f3f3" stroke-width="6"/><path d="M190 109.8c6 3.5 13 9.5 17.5 15.2M207.5 110.5c-7 3.5-13.5 8.5-18 14" stroke="#b6b2b6" stroke-width="2.6" stroke-linecap="round"/><path d="M254 90.1h36.2v3.5l-7.2 6.7h-21.8l-7.2-6.7z" fill="#bcb9bc"/><rect x="262" y="90.1" width="20.2" height="10.3" fill="#f4f0f4"/><rect x="262" y="90.1" width="20.2" height="3.2" fill="#bcb9bc"/><rect x="262.5" y="102.5" width="19.2" height="20.8" fill="#f4f0f4" stroke="#bcb9bc" stroke-width="1"/><rect x="262" y="102" width="20.2" height="4" fill="#bcb9bc"/><rect x="262" y="119.8" width="20.2" height="4" fill="#bcb9bc"/><rect x="264" y="91.2" width="1.5" height="1.7" fill="#fff"/><rect x="264" y="103.2" width="1.9" height="1.8" fill="#fff"/><rect x="264" y="121" width="1.9" height="1.8" fill="#fff"/><rect x="267.7" y="91.2" width="1.5" height="1.7" fill="#fff"/><rect x="267.7" y="103.2" width="1.9" height="1.8" fill="#fff"/><rect x="267.7" y="121" width="1.9" height="1.8" fill="#fff"/><rect x="271.4" y="91.2" width="1.5" height="1.7" fill="#fff"/><rect x="271.4" y="103.2" width="1.9" height="1.8" fill="#fff"/><rect x="271.4" y="121" width="1.9" height="1.8" fill="#fff"/><rect x="275.1" y="91.2" width="1.5" height="1.7" fill="#fff"/><rect x="275.1" y="103.2" width="1.9" height="1.8" fill="#fff"/><rect x="275.1" y="121" width="1.9" height="1.8" fill="#fff"/><rect x="278.8" y="91.2" width="1.5" height="1.7" fill="#fff"/><rect x="278.8" y="103.2" width="1.9" height="1.8" fill="#fff"/><rect x="278.8" y="121" width="1.9" height="1.8" fill="#fff"/><defs><linearGradient id="gl" x1="0" x2="1"><stop offset="0" stop-color="#a9a6a9"/><stop offset="1" stop-color="#e6e3e6"/></linearGradient></defs><rect x="314.6" y="118.7" width="15.8" height="15.6" fill="#f6f2f6" stroke="#bdbabd"/><path d="M327.5 120.8v11.5l-10-5.7z" fill="url(#gl)"/><rect x="314.6" y="147.8" width="15.8" height="15.6" fill="#f6f2f6" stroke="#bdbabd"/><path d="M317.5 149.9v11.5l10-5.7z" fill="url(#gl)"/><path d="M464.3 122l3-2.7 3 2.7" stroke="#b0b0b0" stroke-width="1.1"/><path d="M464.3 132.8l3 2.7 3-2.7" stroke="#b0b0b0" stroke-width="1.1"/><path d="M471.4 150.8l3-2.7 3 2.7" stroke="#b0b0b0" stroke-width="1.1"/><path d="M471.4 161.6l3 2.7 3-2.7" stroke="#b0b0b0" stroke-width="1.1"/><path d="M517.1 102.3h7.2l11.4-10.4v29.5l-4.5-0.5-6.9-7.5h-7.2z" fill="#b7b4b7"/><rect x="532" y="117.3" width="8" height="11.5" fill="#f3f3f3"/><rect x="533" y="118.3" width="5.8" height="9.7" fill="#b7b4b7"/><rect x="540.3" y="113.1" width="5.7" height="14.9" fill="#b7b4b7"/><rect x="547.3" y="108.1" width="5.6" height="19.9" fill="#b7b4b7"/><path d="M538.5 99.5q4 5.5 3.3 11.5" stroke="#b7b4b7" stroke-width="1.4"/><path d="M541.5 94.8q6.5 6.5 7 12.5" stroke="#b7b4b7" stroke-width="1.4"/><path d="M529 157.7l3.4 3.4 3.4-3.4" stroke="#b0b0b0" stroke-width="1.2"/><rect x="566.7" y="89.8" width="11.8" height="12.6" fill="#fff" stroke="#707070" stroke-width="1"/><path d="M570 91.7v8l5.5-4z" fill="#5ba385"/><path d="M579.6 93.6l4.3 0.5-2.7 4.8 2.4 0.3-7.4 8.2 2.5-6.8-2.4-0.3z" fill="#f3f3f3" stroke="#f3f3f3" stroke-width="1.6"/><path d="M579.6 93.6l4.3 0.5-2.7 4.8 2.4 0.3-7.4 8.2 2.5-6.8-2.4-0.3z" fill="#f2c063"/><path d="M776.1 97h6.3l-3.15 3.4z" fill="#444"/><rect x="1005.6" y="93.5" width="28.7" height="29" fill="#f4f0f4" stroke="#bebbbe" stroke-width="1"/><rect x="1005.1" y="93" width="29.7" height="4.7" fill="#bebbbe"/><rect x="1005.1" y="118.4" width="29.7" height="4.5" fill="#bebbbe"/><rect x="1006.8" y="94.2" width="2.6" height="2.4" fill="#fff"/><rect x="1006.8" y="119.5" width="2.6" height="2.4" fill="#fff"/><rect x="1011.7" y="94.2" width="2.6" height="2.4" fill="#fff"/><rect x="1011.7" y="119.5" width="2.6" height="2.4" fill="#fff"/><rect x="1016.6" y="94.2" width="2.6" height="2.4" fill="#fff"/><rect x="1016.6" y="119.5" width="2.6" height="2.4" fill="#fff"/><rect x="1021.5" y="94.2" width="2.6" height="2.4" fill="#fff"/><rect x="1021.5" y="119.5" width="2.6" height="2.4" fill="#fff"/><rect x="1026.4" y="94.2" width="2.6" height="2.4" fill="#fff"/><rect x="1026.4" y="119.5" width="2.6" height="2.4" fill="#fff"/><rect x="1031.3" y="94.2" width="2.6" height="2.4" fill="#fff"/><rect x="1031.3" y="119.5" width="2.6" height="2.4" fill="#fff"/><rect x="1012" y="102" width="19" height="4" fill="#d8d5d8"/><rect x="1009" y="109.8" width="22" height="4.2" fill="#d8d5d8"/><path d="M1008.5 86.5v19.5M998.5 96.6h20" stroke="#f3f3f3" stroke-width="8"/><path d="M1008.5 88.2v16.2M1000.1 96.6h16.8" stroke="#bebbbe" stroke-width="4.8"/><path d="M1047.3 158.4l3.3 3.3 3.3-3.3" stroke="#b0b0b0" stroke-width="1.2"/><defs><radialGradient id="og"><stop offset="0.7" stop-color="#ff8f00"/><stop offset="1" stop-color="#ff8f00" stop-opacity="0"/></radialGradient></defs><circle cx="1112.9" cy="106.9" r="7.6" fill="url(#og)"/><path d="M1896.5 190l6-6 6 6" stroke="#444" stroke-width="1.3"/></svg>
<div id="statusbar"></div>
<span class="t" style="left:14.6px;top:1000.29px;font-size:13.6px;color:#3a3a3a;transform:scaleX(0.9758);">Slide 7 of 9</span>
<span class="t" style="left:144.1px;top:1000.29px;font-size:13.6px;color:#3a3a3a;transform:scaleX(0.9316);">English (India)</span>
<span class="t" style="left:268.2px;top:1000.29px;font-size:13.6px;color:#262626;font-weight:bold;transform:scaleX(0.936);">Accessibility: Investigate</span>
<span class="t" style="left:1308.3px;top:1000.29px;font-size:13.6px;color:#3a3a3a;transform:scaleX(0.9677);">Notes</span>
<span class="t" style="left:1389.3px;top:1000.29px;font-size:13.6px;color:#3a3a3a;transform:scaleX(0.9338);">Comments</span>
<span class="t" style="left:1855px;top:1000.29px;font-size:13.6px;color:#3a3a3a;transform:scaleX(0.8566);">81%</span>
<div class="abs" style="left:1475.7px;top:994px;width:49.3px;height:24px;background:#c6c6c6"></div>
<svg class="abs" style="left:0;top:994px" width="1919" height="24" viewBox="0 994 1919 24" fill="none" stroke="#5a5a5a" stroke-width="1.1"><path d="M105.5 1001v10.5h7.5l1.5 1.5 1.5-1.5h3M105.5 1001h7.5l1.5 1.5v10.5"/><path d="M116.5 1006.5l2.3 2.5 4.5-6" stroke-width="1.3"/><path d="M254.5 1000.5a6.5 6.5 0 1 0 4 11.5" stroke-width="1.2"/><path d="M255 1003v3.5l2 1.5M258 999.5v3M256.5 1001h3"/><path d="M258.5 1008.5l6.5 6.5M265 1008.5l-6.5 6.5" stroke="#333" stroke-width="1.7"/><path d="M1295 999.5l-4 4h8z" fill="#5a5a5a" stroke="none"/><path d="M1288.5 1006h13M1288.5 1009h13M1288.5 1012h9"/><path d="M1369.5 999.5h15.5a1 1 0 0 1 1 1v8.5a1 1 0 0 1-1 1h-8l-3.5 3.8v-3.8h-4a1 1 0 0 1-1-1v-8.5a1 1 0 0 1 1-1z" fill="#5a5a5a" stroke="none"/><rect x="1492.2" y="999.8" width="15.6" height="13.8" stroke="#6a6a6a"/><path d="M1496 1000v13.5" stroke="#6a6a6a"/><rect x="1498.5" y="1002.5" width="7" height="4.5" stroke="#6a6a6a"/><path d="M1496 1010h12" stroke="#6a6a6a"/><rect x="1541.5" y="1000" width="6.3" height="5" stroke="#6a6a6a"/><rect x="1541.5" y="1008.3" width="6.3" height="5" stroke="#6a6a6a"/><rect x="1550.5" y="1000" width="6.3" height="5" stroke="#6a6a6a"/><rect x="1550.5" y="1008.3" width="6.3" height="5" stroke="#6a6a6a"/><path d="M1600 1001.5v11.5M1592.2 1000.5h6.3l1.5 1 1.5-1h6.3v11.5h-6.3l-1.5 1-1.5-1h-6.3z" stroke="#6a6a6a"/><path d="M1594 1003.5h4M1594 1006h4M1594 1008.5h4M1602 1003.5h4M1602 1006h4M1602 1008.5h4" stroke="#8a8a8a" stroke-width="0.9"/><path d="M1600 1012.5v2.5" stroke="#6a6a6a"/><path d="M1641.7 1000.2h16.6" stroke="#6a6a6a" stroke-width="1.4"/><path d="M1643.5 1000.5v7.5h13v-7.5M1650 1008v5.5M1646.5 1013.8h7" stroke="#6a6a6a"/><path d="M1683 1006.8h8.7M1830 1006.8h9M1834.5 1002.3v9" stroke="#444" stroke-width="1.2"/><path d="M1698.3 1007.3h125" stroke="#555" stroke-width="1"/><path d="M1760.7 1003.5v7.5" stroke="#444" stroke-width="1"/><rect x="1745.7" y="999.8" width="5.8" height="14" fill="#444" stroke="none"/><rect x="1898.8" y="1000.5" width="12.8" height="12.8" stroke="#6a6a6a"/><path d="M1905.2 1002v3M1905.2 1009v3M1900.5 1007h3M1907 1007h3" stroke="#6a6a6a" stroke-width="0.9"/></svg>
<div class="abs" style="left:629.4px;top:114px;width:158.2px;height:75px;background:#fff;border:1px solid #8f8f8f;border-radius:3.5px;box-shadow:0 3px 7px rgba(0,0,0,.28);overflow:hidden"><div class="abs" style="left:0;top:0;width:160px;height:23.6px;background:#c6c6c6"></div></div>
<span class="t" style="left:634.25px;top:119.9px;font-size:15px;color:#262626;transform:scaleX(0.945);">In Click Sequence</span>
<span class="t" style="left:634.25px;top:167.8px;font-size:15px;color:#3b3b3b;transform:scaleX(0.964);">When Clicked On</span>
<div class="abs" style="left:621px;top:132px;width:165px;height:31px;background:#fff;border-radius:4px;overflow:hidden"><div class="abs" style="left:0;top:0;width:8.4px;height:31px;background:#f3f3f3"></div><div class="abs" style="left:8.4px;top:0;width:1px;height:31px;background:#8f8f8f"></div><div class="abs" style="left:9.4px;top:0;width:160px;height:6.4px;background:#c6c6c6"></div></div>
<span class="t" style="left:587.4px;top:149.9px;font-size:15px;color:#b3b3b3;transform:scaleX(0.9433);clip-path:polygon(24.81% 0,29.03% 0,29.03% 100%,24.81% 100%);">Hide While Not Playing</span>
<span class="t" style="left:634.25px;top:143.6px;font-size:15px;color:#3b3b3b;transform:scaleX(1.0258);">Automatically</span>
<svg class="abs" style="left:0;top:0" width="1919" height="1018" viewBox="0 0 1919 1018" fill="none"><rect x="619.85" y="130.7" width="167.3" height="33.9" rx="6.4" stroke="#ef4237" stroke-width="6.8"/><g stroke="#ef4237" stroke-width="6.2" stroke-linecap="round" stroke-linejoin="round"><path d="M1552.7 606.6L797.5 170.2"/><path d="M822.5 168.6L797.5 170.2L809.8 190.5" stroke-width="6.8"/></g></svg>
</body></html>
